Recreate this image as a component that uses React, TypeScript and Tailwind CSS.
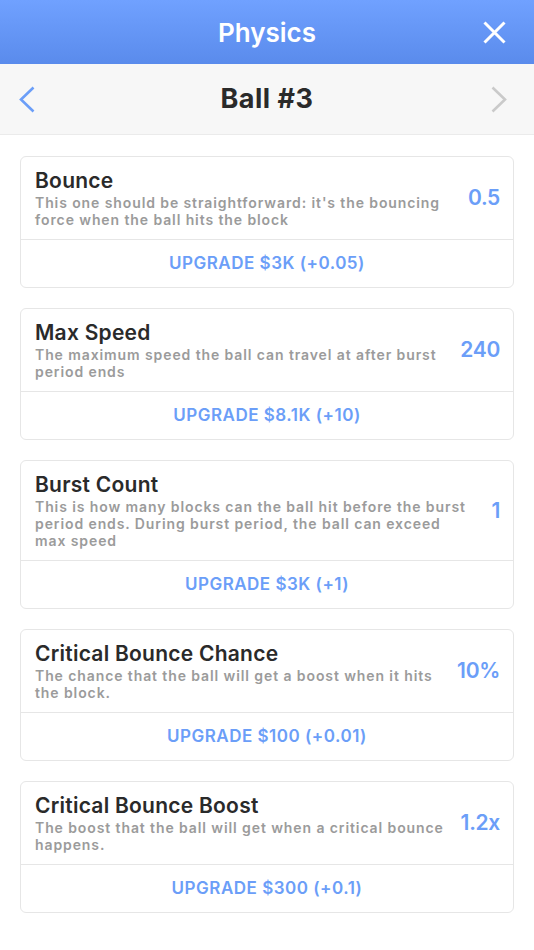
interface Stat {
  name: string;
  description: string;
  value: string;
  upgrade: string;
}

const stats: Stat[] = [
  {
    name: "Bounce",
    description:
      "This one should be straightforward: it's the bouncing force when the ball hits the block",
    value: "0.5",
    upgrade: "UPGRADE $3K (+0.05)",
  },
  {
    name: "Max Speed",
    description: "The maximum speed the ball can travel at after burst period ends",
    value: "240",
    upgrade: "UPGRADE $8.1K (+10)",
  },
  {
    name: "Burst Count",
    description:
      "This is how many blocks can the ball hit before the burst period ends. During burst period, the ball can exceed max speed",
    value: "1",
    upgrade: "UPGRADE $3K (+1)",
  },
  {
    name: "Critical Bounce Chance",
    description: "The chance that the ball will get a boost when it hits the block.",
    value: "10%",
    upgrade: "UPGRADE $100 (+0.01)",
  },
  {
    name: "Critical Bounce Boost",
    description: "The boost that the ball will get when a critical bounce happens.",
    value: "1.2x",
    upgrade: "UPGRADE $300 (+0.1)",
  },
];

function Chevron({ dir, className }: { dir: "left" | "right"; className?: string }) {
  return (
    <svg width="16" height="27" viewBox="0 0 16 27" fill="none" className={className}>
      <path
        d={dir === "left" ? "M14.5 1.5 L2 13.5 L14.5 25.5" : "M1.5 1.5 L14 13.5 L1.5 25.5"}
        stroke="currentColor"
        strokeWidth="2.6"
      />
    </svg>
  );
}

function StatCard({ stat }: { stat: Stat }) {
  return (
    <div className="rounded-md border border-[#e6e6e6] bg-white">
      <div className="flex items-center gap-2 pl-[14px] pr-[13px] py-[11px] border-b border-[#e6e6e6]">
        <div className="flex-1">
          <h2 className="text-[21px] leading-[26px] font-semibold tracking-[0.25px] text-[#2a2a2a]">
            {stat.name}
          </h2>
          <p className="text-[14px] leading-[17px] font-semibold tracking-[0.9px] text-[#9b9b9b]">
            {stat.description}
          </p>
        </div>
        <span className="shrink-0 min-w-[24px] text-right text-[21px] font-semibold tracking-[-0.3px] text-[#6b9ef8]">
          {stat.value}
        </span>
      </div>
      <button className="w-full h-[47px] text-[17px] font-semibold tracking-[0.5px] text-[#6b9ef8]">
        {stat.upgrade}
      </button>
    </div>
  );
}

export default function App() {
  return (
    <div className="min-h-screen bg-white font-['Inter',sans-serif]">
      {/* Header */}
      <div className="relative h-16 flex items-center justify-center bg-gradient-to-b from-[#70a1ff] to-[#5a8bec]">
        <h1 className="text-[26px] font-semibold text-white">Physics</h1>
        <button className="absolute right-[28px] top-[21px] text-white">
          <svg width="23" height="23" viewBox="0 0 23 23" fill="none">
            <path d="M1.5 1.5 L21.5 21.5 M21.5 1.5 L1.5 21.5" stroke="currentColor" strokeWidth="3" />
          </svg>
        </button>
      </div>

      {/* Ball selector */}
      <div className="h-[71px] grid grid-cols-[1fr_auto_1fr] items-center pl-[19px] pr-[27px] bg-[#f7f7f7] border-b border-[#ebebeb]">
        <Chevron dir="left" className="text-[#6b9ef8]" />
        <span className="text-[27px] font-bold tracking-[0.5px] text-[#2a2a2a] translate-x-[4px]">
          Ball #3
        </span>
        <Chevron dir="right" className="text-[#cacaca] justify-self-end" />
      </div>

      {/* Stats */}
      <div className="flex flex-col gap-5 px-5 pt-[21px] pb-8">
        {stats.map((stat) => (
          <StatCard key={stat.name} stat={stat} />
        ))}
      </div>
    </div>
  );
}
